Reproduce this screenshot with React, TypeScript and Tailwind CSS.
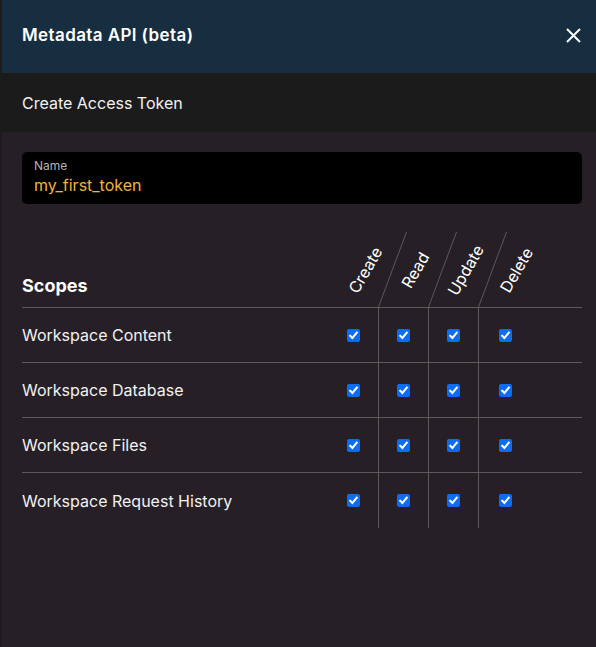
import React from 'react';

const scopes = [
  'Workspace Content',
  'Workspace Database',
  'Workspace Files',
  'Workspace Request History',
];

const actions = ['Create', 'Read', 'Update', 'Delete'];

const Checkbox: React.FC = () => (
  <span className="flex h-[13px] w-[13px] items-center justify-center rounded-[2px] bg-[#0b6cf4]">
    <svg width="11" height="11" viewBox="0 0 11 11" fill="none">
      <path d="M2.2 5.8 L4.4 8 L8.8 2.6" stroke="white" strokeWidth="2" strokeLinecap="square" />
    </svg>
  </span>
);

const cellBorder = ['', 'border-l', 'border-l', 'border-l'];

export default function App() {
  return (
    <div
      className="flex min-h-[647px] w-full bg-[#1c1b1d] text-white"
      style={{ fontFamily: 'Inter, "Noto Sans", sans-serif' }}
    >
      <div className="w-[2px] shrink-0" />
      <div className="flex flex-1 flex-col bg-[#261f26]">
        {/* Title bar */}
        <div className="flex h-[73px] items-center justify-between bg-[#172e40] pb-[2px] pl-5 pr-[15px]">
          <h1 className="text-[17px] font-semibold tracking-[0.4px]">Metadata API (beta)</h1>
          <button className="flex h-[15px] w-[15px] items-center justify-center">
            <svg width="15" height="15" viewBox="0 0 15 15" fill="none">
              <path d="M1 1 L14 14 M14 1 L1 14" stroke="white" strokeWidth="2" />
            </svg>
          </button>
        </div>

        {/* Sub header */}
        <div className="flex h-[59px] items-center bg-[#1b1b1b] pl-5">
          <span className="text-[16px] text-[#f2f2f2]">Create Access Token</span>
        </div>

        <div className="flex flex-col pl-5 pr-[14px] pt-5">
          {/* Name field */}
          <div className="flex flex-col rounded-[5px] bg-black px-3 pb-2 pt-[6px]">
            <span className="text-[12px] leading-4 text-[#b4b4b4]">Name</span>
            <span className="text-[16px] leading-[22px] text-[#f1b43c]">my_first_token</span>
          </div>

          {/* Scopes table */}
          <div className="mt-[28px] flex flex-col">
            <div className="grid h-[76px] grid-cols-[306px_50px_50px_50px_53px_1fr] border-b border-[#5c5a5c]">
              <div className="flex items-end pb-2 text-[18px] font-bold">Scopes</div>
              {actions.map((a, i) => (
                <div key={a} className="relative flex items-center justify-center">
                  {i > 0 && (
                    <div className="absolute inset-y-0 left-0 w-px origin-bottom skew-x-[-20.5deg] bg-[#5c5a5c]" />
                  )}
                  <span className="translate-x-3 -rotate-60 text-[16px] text-white">{a}</span>
                </div>
              ))}
              <div />
            </div>

            {scopes.map((s, r) => (
              <div
                key={s}
                className={`grid h-[55px] grid-cols-[306px_50px_50px_50px_53px_1fr] ${
                  r < scopes.length - 1 ? 'border-b border-[#5c5a5c]' : ''
                }`}
              >
                <div className="flex items-center text-[16px] text-[#f2f2f2]">{s}</div>
                {actions.map((a, i) => (
                  <div
                    key={a}
                    className={`flex items-center justify-center border-[#5c5a5c] ${cellBorder[i]}`}
                  >
                    <Checkbox />
                  </div>
                ))}
                <div />
              </div>
            ))}
          </div>
        </div>
      </div>
    </div>
  );
}
